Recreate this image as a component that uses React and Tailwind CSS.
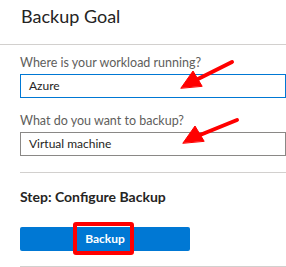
export default function App() {
  const font = { fontFamily: 'Lato, "Open Sans", sans-serif' };
  return (
    <div className="relative w-[286px] h-[267px] bg-white overflow-hidden" style={font}>
      <div className="h-[45px] border-b border-[#d2d0ce] pl-[21px] pt-[3px]">
        <div className="text-[18px] leading-[26px] text-[#252423]">Backup Goal</div>
      </div>
      <div className="pl-[20px] pt-[9px]">
        <div className="h-[18px] text-[12.5px] leading-[18px] text-[#605e5c]">Where is your workload running?</div>
        <div className="mt-[2px] h-[24px] border border-[#0078d4] pl-[8px] text-[12px] leading-[22px] text-[#252423]">Azure</div>
        <div className="mt-[14px] h-[18px] text-[12.5px] leading-[18px] text-[#605e5c]">What do you want to backup?</div>
        <div className="mt-[2px] h-[24px] border border-[#8a8886] pl-[8px] text-[12px] leading-[22px] text-[#252423]">Virtual machine</div>
        <div className="mt-[16px] h-px bg-[#d2d0ce]" />
        <div className="mt-[15px] h-[18px] text-[14px] leading-[18px] font-bold text-[#252423]">Step: Configure Backup</div>
        <div className="mt-[21px] w-[170px] h-[24px] rounded-[2px] bg-[#0078d4] flex items-center justify-center text-[12px] font-bold text-white">Backup</div>
        <div className="mt-[15px] h-px bg-[#d2d0ce]" />
      </div>
      <div className="absolute left-[73px] top-[222px] w-[61px] h-[33px] border-[4px] border-[#ff0000] rounded-[3px]" />
      <svg className="absolute left-0 top-0" width="286" height="267" viewBox="0 0 286 267">
        <g fill="#ff0000" stroke="#ff0000" strokeLinecap="round" strokeLinejoin="round">
          <line x1="232" y1="62" x2="198" y2="79" strokeWidth="4" />
          <polygon points="181,88 193,71 202,86" strokeWidth="1" />
          <line x1="237" y1="120" x2="200" y2="135" strokeWidth="4" />
          <polygon points="183,143 195,126 204,141" strokeWidth="1" />
        </g>
      </svg>
    </div>
  );
}
